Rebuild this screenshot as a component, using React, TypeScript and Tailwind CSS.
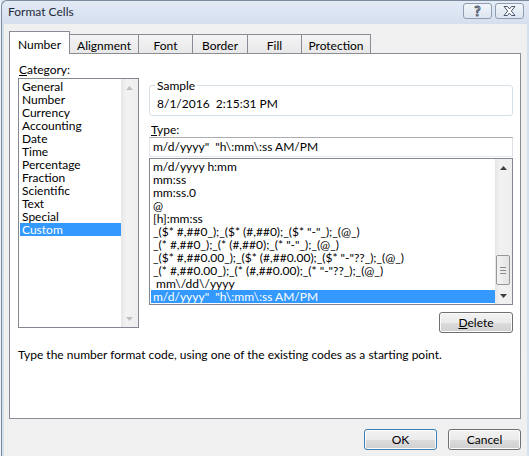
import React from "react";

const categories = [
  "General",
  "Number",
  "Currency",
  "Accounting",
  "Date",
  "Time",
  "Percentage",
  "Fraction",
  "Scientific",
  "Text",
  "Special",
  "Custom",
];

const formats = [
  "m/d/yyyy h:mm",
  "mm:ss",
  "mm:ss.0",
  "@",
  "[h]:mm:ss",
  '_($* #,##0_);_($* (#,##0);_($* "-"_);_(@_)',
  '_(* #,##0_);_(* (#,##0);_(* "-"_);_(@_)',
  '_($* #,##0.00_);_($* (#,##0.00);_($* "-"??_);_(@_)',
  '_(* #,##0.00_);_(* (#,##0.00);_(* "-"??_);_(@_)',
  " mm\\/dd\\/yyyy",
  'm/d/yyyy"  "h\\:mm\\:ss AM/PM',
];

const tabs = [
  { label: "Number", w: "w-[61px]" },
  { label: "Alignment", w: "w-[70px]" },
  { label: "Font", w: "w-[55px]" },
  { label: "Border", w: "w-[56px]" },
  { label: "Fill", w: "w-[55px]" },
  { label: "Protection", w: "w-[70px]" },
];

const btn =
  "flex items-center justify-center rounded-[3px] border bg-[linear-gradient(#f2f2f2_0%,#ebebeb_50%,#dddddd_51%,#cfcfcf_100%)] shadow-[inset_0_0_0_1px_#fbfbfb]";

function Arrow({ up, color }: { up?: boolean; color: string }) {
  return (
    <svg width="7" height="4" viewBox="0 0 7 4">
      <path d={up ? "M0 4 L3.5 0 L7 4 Z" : "M0 0 L3.5 4 L7 0 Z"} fill={color} />
    </svg>
  );
}

function ScrollButton({ up, color }: { up?: boolean; color: string }) {
  return (
    <div className="flex h-[17px] items-center justify-center">
      <Arrow up={up} color={color} />
    </div>
  );
}

export default function App() {
  return (
    <div className="h-[456px] w-[529px] overflow-hidden border-l border-[#eef3f9] bg-[#d6e1ef] font-['Lato',sans-serif] text-[12px] text-black">
      <div className="flex h-full flex-col rounded-tl-[6px] border-l border-t border-[#7b8a9c] bg-[linear-gradient(#e2eaf5,#d4dfee_24px,#d6e1ef)]">
        {/* Title bar */}
        <div className="flex h-[23px] items-center pl-[6px] pr-[5px]">
          <span className="pb-[1px] text-[12px] text-[#1e2a38]">Format Cells</span>
          <div className="ml-auto flex gap-[3px] pb-[3px]">
            <div className="flex h-[16px] w-[29px] items-center justify-center rounded-[3px] border border-[#8e9db1] bg-[linear-gradient(#f1f5fa,#dce5f0)]">
              <span className="text-[13px] font-bold leading-none text-white [-webkit-text-stroke:1px_#4a586b]">?</span>
            </div>
            <div className="flex h-[16px] w-[29px] items-center justify-center rounded-[3px] border border-[#8e9db1] bg-[linear-gradient(#f1f5fa,#dce5f0)]">
              <svg width="13" height="10" viewBox="0 0 13 10">
                <path
                  d="M1 0.5 H4.5 L6.5 3 L8.5 0.5 H12 L8.3 5 L12 9.5 H8.5 L6.5 7 L4.5 9.5 H1 L4.7 5 Z"
                  fill="#ffffff"
                  stroke="#4a586b"
                  strokeWidth="1"
                />
              </svg>
            </div>
          </div>
        </div>

        {/* Body */}
        <div className="mr-[2px] ml-[2px] flex flex-1 flex-col bg-[#f0f0f0] pt-[7px] pr-[6px] pl-[5px]">
          {/* Tabs */}
          <div className="flex h-[22px] items-end">
            {tabs.map((t, i) =>
              i === 0 ? (
                <div
                  key={t.label}
                  className={`relative z-10 mb-[-1px] flex h-[23px] ${t.w} justify-center border border-b-0 border-[#898c95] bg-white pt-[4px]`}
                >
                  {t.label}
                </div>
              ) : (
                <div
                  key={t.label}
                  className={`-ml-px flex h-[19px] ${t.w} justify-center border border-b-0 border-[#898c95] bg-[linear-gradient(#f4f4f4,#e8e8e8)] pt-[2px]`}
                >
                  {t.label}
                </div>
              )
            )}
          </div>

          {/* Panel */}
          <div className="flex h-[366px] w-[512px] flex-col border border-[#898c95] bg-white">
            <div className="flex">
              {/* Category column */}
              <div className="ml-[8px] flex w-[121px] flex-col">
                <div className="mt-[8px] mb-[1px] h-[15px] pl-[1px] leading-[15px]">
                  <span className="underline">C</span>ategory:
                </div>
                <div className="flex h-[250px] border border-[#828790]">
                  <div className="flex-1 pt-[1px] pl-[1px]">
                    {categories.map((c) => (
                      <div
                        key={c}
                        className={`h-[13px] px-[2px] leading-[13px] ${c === "Custom" ? "bg-[#3399ff] text-white" : ""}`}
                      >
                        {c}
                      </div>
                    ))}
                  </div>
                  <div className="flex w-[17px] flex-col justify-between bg-[linear-gradient(90deg,#e6e6e6,#f2f2f2_30%,#eeeeee)]">
                    <ScrollButton up color="#bfbfbf" />
                    <ScrollButton color="#bfbfbf" />
                  </div>
                </div>
              </div>

              {/* Right column */}
              <div className="ml-[10px] flex w-[364px] flex-col">
                <div className="relative mt-[31px] h-[31px] rounded-[3px] border border-[#d5dfe5] pt-[10px] pl-[7px]">
                  <span className="absolute -top-[8px] left-[5px] bg-white px-[2px] leading-[15px]">Sample</span>
                  <div className="leading-[15px] whitespace-pre">8/1/2016  2:15:31 PM</div>
                </div>
                <div className="mt-[6px] h-[15px] pl-[2px] leading-[15px]">
                  <span className="underline">T</span>ype:
                </div>
                <div className="flex h-[20px] items-center border border-[#abadb3] border-r-[#dbdfe6] border-b-[#e3e9ef] border-l-[#e2e3ea] pl-[3px] whitespace-pre">
                  {'m/d/yyyy"  "h\\:mm\\:ss AM/PM'}
                </div>
                <div className="mt-[1px] flex h-[147px] border border-[#828790]">
                  <div className="flex-1 overflow-hidden pt-[1px] pl-[1px]">
                    {formats.map((f, i) => (
                      <div
                        key={i}
                        className={`h-[13px] px-[2px] leading-[13px] whitespace-pre ${i === formats.length - 1 ? "bg-[#3399ff] text-white" : ""}`}
                      >
                        {f}
                      </div>
                    ))}
                  </div>
                  <div className="flex w-[17px] flex-col bg-[linear-gradient(90deg,#e6e6e6,#f2f2f2_30%,#eeeeee)]">
                    <ScrollButton up color="#404040" />
                    <div className="flex-1">
                      <div className="mt-[79px] ml-[1px] flex h-[30px] w-[14px] flex-col items-center justify-center gap-[2px] rounded-[2px] border border-[#979797] bg-[linear-gradient(90deg,#f2f2f2,#e4e4e4)]">
                        <div className="h-px w-[6px] bg-[#8a8a8a]" />
                        <div className="h-px w-[6px] bg-[#8a8a8a]" />
                        <div className="h-px w-[6px] bg-[#8a8a8a]" />
                      </div>
                    </div>
                    <ScrollButton color="#404040" />
                  </div>
                </div>
                <div className={`${btn} mt-[7px] h-[21px] w-[74px] self-end border-[#707070]`}>
                  <span>
                    <span className="underline">D</span>elete
                  </span>
                </div>
              </div>
            </div>
            <div className="mt-[14px] pl-[8px] leading-[15px]">
              Type the number format code, using one of the existing codes as a starting point.
            </div>
          </div>

          {/* Buttons */}
          <div className="mt-[10px] flex justify-end gap-[11px]">
            <div className={`${btn} h-[21px] w-[73px] border-[#3c7fb1] shadow-[inset_0_0_0_1px_#c8e8fa]`}>OK</div>
            <div className={`${btn} h-[21px] w-[73px] border-[#707070]`}>Cancel</div>
          </div>
        </div>
      </div>
    </div>
  );
}
